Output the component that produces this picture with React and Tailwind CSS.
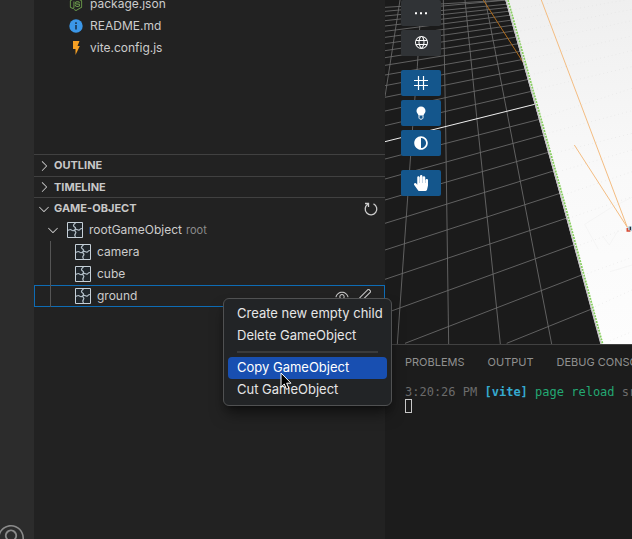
import React from "react";
import {
  VscAccount,
  VscChevronDown,
  VscChevronRight,
  VscEdit,
  VscEye,
  VscGlobe,
} from "react-icons/vsc";
import { FaAdjust, FaHandPaper, FaNodeJs } from "react-icons/fa";

const crossLines = [
  [15, 22, 378, 0], [15, 34, 382, 0], [15, 48, 386, 12], [15, 62, 389, 22],
  [15, 78, 392, 33], [15, 94, 395, 45], [15, 112, 398, 60], [15, 131, 402, 75],
  [15, 152, 407, 92], [15, 173, 411, 111], [15, 196, 416, 131], [15, 225, 422, 154],
  [15, 257, 430, 178], [15, 292, 439, 206], [15, 333, 446, 238], [15, 377, 454, 274],
  [15, 477, 478, 358], [15, 537, 490, 405], [15, 600, 505, 457], [15, 670, 520, 513],
  [15, 750, 540, 580], [15, 838, 558, 655], [15, 940, 580, 735], [75, 1030, 605, 825],
  [380, 1030, 635, 927],
];

function Scene() {
  return (
    <svg
      className="block h-full w-full"
      viewBox="15 0 741 1032"
      preserveAspectRatio="xMinYMin slice"
      fill="none"
      aria-hidden="true"
    >
      <defs>
        <linearGradient id="plane" gradientUnits="userSpaceOnUse" x1="0" y1="0" x2="0" y2="1032">
          <stop offset="0" stopColor="#efefef" />
          <stop offset="0.5" stopColor="#f9f9f9" />
          <stop offset="1" stopColor="#fdfdfd" />
        </linearGradient>
      </defs>
      <g stroke="#6c6c6c" strokeWidth="2.6">
        <path d="M60 0 15 290M124 0 112 200 98 380 52 1032M190 0 197 380 206 1032M255 0 290 350 361 1032M316 0 515 1032" />
        {crossLines.map(([x1, y1, x2, y2]) => (
          <line key={y1 + "-" + x1} x1={x1} y1={y1} x2={x2} y2={y2} />
        ))}
      </g>
      <path d="M15 425 464 313" stroke="#f0f0f0" strokeWidth="3" />
      <path d="M310 0 430 188" stroke="#b06c1c" strokeWidth="3" />
      <path d="M376 0H1800V1800H874L662 1032 540 585 464 313Z" fill="url(#plane)" />
      <path d="M378 0 466 313 542 585 663 1032" stroke="#c4c4c4" strokeWidth="4" />
      <path d="M384 0 471 313 547 585 668 1032" stroke="#84cc5c" strokeWidth="5" strokeDasharray="6 3" />
      <g stroke="#dedede" strokeWidth="2" strokeDasharray="2 10">
        <path d="M395 30 560 0M400 60 756 -4M410 95 756 28M420 135 756 62M430 180 756 108M450 225 756 152M460 270 756 200M480 355 756 265M495 402 756 332M520 460 756 400M535 515 756 450M550 585 756 515M565 655 756 590M600 735 756 680M610 825 756 772M645 920 756 870M690 1022 756 995" />
      </g>
      <path d="M614 673 690 625 756 592M614 673 655 748M668 708 688 735 715 690M690 815 756 795" stroke="#f1f1f1" strokeWidth="2" />
      <path d="M484 0 742 682M583 435 742 682" stroke="#f4bd82" strokeWidth="3" />
      <circle cx="750" cy="686" r="8" fill="#b9d6e5" />
      <path d="M742 684v9h9" stroke="#d94c35" strokeWidth="5" />
      <path d="M751 680v10" stroke="#29323b" strokeWidth="4" />
    </svg>
  );
}

function ObjectIcon() {
  return (
    <svg className="size-4 shrink-0" viewBox="0 0 16 16" fill="none" aria-hidden="true">
      <path d="M.5.5h15v15H.5z" fill="#20262b" stroke="#c6d0d8" />
      <path
        d="M8.500 1C7.500 2 6 2.500 6.500 3.800S9 5 8.500 6.500 7 8 8 9s1.500 1.500.5 2.500S7.500 13.500 8.500 15M1 8.500c1-.5 2-1.500 3-.8s1.500 1.600 2.700.8S9 7 10 7.500s1.500 1.300 2.500.3S14.200 6.500 15 6.500"
        stroke="#b4c0c9"
        strokeWidth="1.200"
      />
    </svg>
  );
}

function RefreshIcon() {
  return (
    <svg className="size-4" viewBox="0 0 16 16" fill="none" stroke="currentColor" strokeWidth="1.300" aria-hidden="true">
      <path d="M10.500 2.800A5.800 5.800 0 1 1 4.800 3.200M2 2.500h3.500V6" />
    </svg>
  );
}

function BulbIcon() {
  return (
    <svg className="size-4" viewBox="0 0 16 16" fill="currentColor" aria-hidden="true">
      <path d="M8 1.500a4.500 4.500 0 0 0-4.500 4.500c0 2 1.500 2.800 2 4.500h5c.5-1.700 2-2.500 2-4.500A4.500 4.500 0 0 0 8 1.500Z" />
      <path d="M6 10.500v2.300c0 .8.800 1.400 2 1.400s2-.6 2-1.400v-2.300" fill="none" stroke="currentColor" />
    </svg>
  );
}

function GridIcon() {
  return (
    <svg className="size-4" viewBox="0 0 16 16" fill="none" stroke="currentColor" strokeWidth="1.200" aria-hidden="true">
      <path d="M5.500 1v14M10.500 1v14M1 5.500h14M1 10.500h14" />
    </svg>
  );
}

function DotsIcon() {
  return (
    <svg className="size-4" viewBox="0 0 16 16" fill="currentColor" aria-hidden="true">
      <path d="M2 7.200h2v2H2zM7 7.200h2v2H7zM12 7.200h2v2h-2z" />
    </svg>
  );
}

function ToolButton({ label, active, children }) {
  return (
    <button
      type="button"
      aria-label={label}
      className={
        "flex h-[26px] w-10 items-center justify-center rounded-xs text-white " +
        (active ? "bg-[#14568c]" : "bg-[#303336]")
      }
    >
      {children}
    </button>
  );
}

function FileRow({ icon, name }) {
  return (
    <li className="flex h-[22px] items-center gap-1.5 pl-[34px]">
      <span className="flex w-4 shrink-0 justify-center">{icon}</span>
      <span>{name}</span>
    </li>
  );
}

function Section({ title, open, children, height }) {
  const Chevron = open ? VscChevronDown : VscChevronRight;
  return (
    <div className={"flex items-center border-t border-[#414141] pr-1.5 pl-0.5 " + height}>
      <button type="button" className="flex flex-1 items-center gap-0.5 text-[11px] font-bold text-[#c8c8c8]">
        <Chevron className="size-4" />
        {title}
      </button>
      {children}
    </div>
  );
}

function ChildRow({ name, selected }) {
  return (
    <li
      className={
        "flex h-[22px] items-center border " +
        (selected ? "border-[#0e6cb5]" : "border-transparent")
      }
    >
      <span className="ml-[15px] h-[22px] w-px shrink-0 bg-[#555555]" />
      <span className="ml-6 flex flex-1 items-center gap-1.5">
        <ObjectIcon />
        {name}
      </span>
      {selected && (
        <span className="mr-3 flex gap-1.5 text-[#c8c8c8]">
          <button type="button" aria-label="Toggle visibility"><VscEye className="size-4" /></button>
          <button type="button" aria-label="Edit"><VscEdit className="size-4" /></button>
        </span>
      )}
    </li>
  );
}

function MenuItem({ children, active }) {
  return (
    <button
      type="button"
      role="menuitem"
      className={
        "flex h-[22px] w-full items-center rounded px-[9px] whitespace-nowrap " +
        (active ? "bg-[#184fb1] text-white" : "")
      }
    >
      {children}
    </button>
  );
}

export default function App() {
  return (
    <div className="relative flex h-screen overflow-hidden bg-[#1b1b1b] font-['Inter','Liberation_Sans',sans-serif] text-[12px] text-[#cccccc]">
      <nav className="flex w-[34px] shrink-0 flex-col justify-end overflow-hidden bg-[#2c2c2c]">
        <button type="button" aria-label="Account" className="-mb-3 -ml-0.5 text-[#8a8a8a]">
          <VscAccount className="size-[26px]" />
        </button>
      </nav>

      <aside className="w-[351px] shrink-0 overflow-hidden bg-[#222222]">
        <div className="h-[154px] overflow-hidden">
          <ul className="-mt-[7px]">
            <FileRow name="package.json" icon={<FaNodeJs className="size-3.5 text-[#6d9e4c]" />} />
            <FileRow
              name="README.md"
              icon={
                <svg className="size-3.5" viewBox="0 0 14 14" aria-hidden="true">
                  <circle cx="7" cy="7" r="6.700" fill="#3b97e8" />
                  <path d="M6.200 3.300h1.600v1.600H6.200zM6.200 6h1.600v4.500H6.200z" fill="#1b3550" />
                </svg>
              }
            />
            <FileRow
              name="vite.config.js"
              icon={
                <svg className="size-3.5" viewBox="0 0 14 14" aria-hidden="true">
                  <path d="M4 0h6.500L8.500 5h2.300L6.500 14V8H4z" fill="#f6a024" />
                </svg>
              }
            />
          </ul>
        </div>
        <Section title="OUTLINE" height="h-[22px]" />
        <Section title="TIMELINE" height="h-[21px]" />
        <Section title="GAME-OBJECT" open height="h-[22px]">
          <button type="button" aria-label="Refresh"><RefreshIcon /></button>
        </Section>
        <div className="flex h-[22px] items-center pl-[11px]">
          <VscChevronDown className="mr-1.5 size-4" />
          <ObjectIcon />
          <span className="ml-1.5">rootGameObject</span>
          <span className="ml-1 text-[11px] text-[#8b8b8b]">root</span>
        </div>
        <ul>
          <ChildRow name="camera" />
          <ChildRow name="cube" />
          <ChildRow name="ground" selected />
        </ul>
      </aside>

      <main className="flex min-w-0 flex-1 flex-col">
        <section className="relative min-h-0 flex-1 overflow-hidden bg-[#1b1b1b]">
          <Scene />
          <div className="absolute top-0 left-4 flex flex-col gap-3.5">
            <div className="flex flex-col gap-1">
              <ToolButton label="More"><DotsIcon /></ToolButton>
              <ToolButton label="World space"><VscGlobe className="size-4" /></ToolButton>
            </div>
            <div className="flex flex-col gap-1">
              <ToolButton label="Grid" active><GridIcon /></ToolButton>
              <ToolButton label="Lighting" active><BulbIcon /></ToolButton>
              <ToolButton label="Contrast" active><FaAdjust className="size-3.5" /></ToolButton>
            </div>
            <ToolButton label="Pan" active><FaHandPaper className="size-4" /></ToolButton>
          </div>
        </section>
        <section className="h-[195px] shrink-0 overflow-hidden border-t border-[#414141] bg-[#1c1c1c] pl-5">
          <div className="flex h-[34px] items-center gap-[23px] text-[11px] whitespace-nowrap text-[#909090]">
            <button type="button">PROBLEMS</button>
            <button type="button">OUTPUT</button>
            <button type="button">DEBUG CONSOLE</button>
          </div>
          <div className="pt-1.5 font-['DejaVu_Sans_Mono','Liberation_Mono',monospace] text-[12px] leading-[14px] whitespace-pre">
            <p className="text-[#6b6b6b]">
              3:20:26 PM <b className="text-[#35a9cf]">[vite]</b> <span className="text-[#23a873]">page reload</span> src
            </p>
            <div className="h-3.5 w-[7px] border border-[#c8c8c8]" />
          </div>
        </section>
      </main>

      <div
        role="menu"
        className="absolute top-[298px] left-[223px] w-[169px] rounded-md border border-[#505152] bg-[#222426] p-1 text-[13px] text-[#e6e6e6] shadow-lg shadow-black/50"
      >
        <MenuItem>Create new empty child</MenuItem>
        <MenuItem>Delete GameObject</MenuItem>
        <hr className="mx-[9px] my-1 border-t-2 border-[#3a3b3c]" />
        <MenuItem active>Copy GameObject</MenuItem>
        <MenuItem>Cut GameObject</MenuItem>
      </div>

      <svg className="pointer-events-none absolute top-[372px] left-[280px] h-[19px] w-3" viewBox="0 0 12 19" aria-hidden="true">
        <path d="M1 1v14l3.300-3 2.200 5.300 2.400-1-2.200-5.100H11z" fill="#000" stroke="#fff" />
      </svg>
    </div>
  );
}
